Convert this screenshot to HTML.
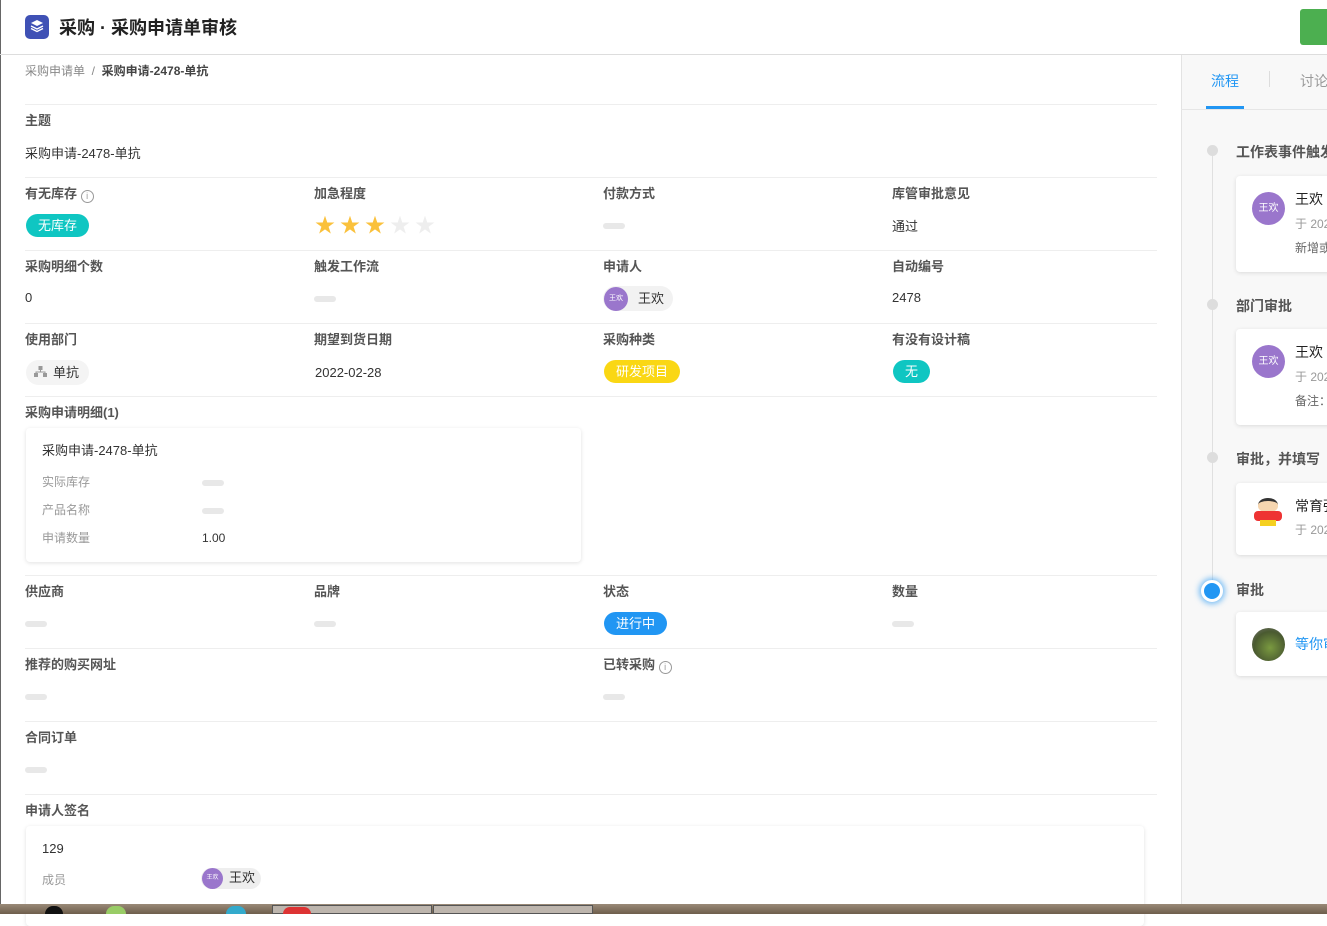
<!DOCTYPE html>
<html><head><meta charset="utf-8"><style>
*{margin:0;padding:0;box-sizing:border-box}
body{width:1327px;height:914px;overflow:hidden;background:#fff;font-family:"Liberation Sans","Noto Sans CJK SC",sans-serif;position:relative;color:#333;line-height:1}
.a{position:absolute;white-space:nowrap}
.lbl{font-size:13px;color:#555;font-weight:bold}
.val{font-size:13px;color:#333}
.line{position:absolute;left:25px;width:1132px;height:1px;background:#eee}
.dash{position:absolute;width:22px;height:6px;border-radius:3px;background:#e8e8e8}
.tag{position:absolute;height:23px;border-radius:12px;color:#fff;font-size:13px;line-height:23px;padding:0 12px}
.star{position:absolute;font-size:20px;line-height:20px}
.card{position:absolute;background:#fff;border-radius:4px;box-shadow:0 1px 4px rgba(0,0,0,.12)}
.av{position:absolute;border-radius:50%;background:#9a76cc;color:#fff;text-align:center}
.ii{display:inline-block;width:13px;height:13px;border:1px solid #999;border-radius:50%;font-size:9px;color:#999;text-align:center;line-height:11px;font-weight:normal;vertical-align:-1px}
</style></head><body>
<div class="a" style="left:0;top:0;width:1px;height:914px;background:#666"></div>
<div class="a" style="left:25px;top:15px;width:24px;height:24px;border-radius:5px;background:#3f51b5"></div>
<svg class="a" style="left:29px;top:18px" width="16" height="16" viewBox="0 0 16 16"><path d="M8 2 L14 5 L8 8 L2 5Z" fill="#fff"/><path d="M2 8 L8 11 L14 8 M2 10.5 L8 13.5 L14 10.5" stroke="#fff" stroke-width="1.3" fill="none"/></svg>
<div class="a" style="left:59px;top:19px;font-size:18px;font-weight:bold;color:#222">采购 · 采购申请单审核</div>
<div class="a" style="left:1300px;top:9px;width:27px;height:36px;background:#4caf50;border-radius:3px 0 0 3px"></div>
<div class="a" style="left:0;top:54px;width:1327px;height:1px;background:#ddd"></div>
<div class="a" style="left:25px;top:65px;font-size:12px;color:#888">采购申请单 &nbsp;/&nbsp; <span style="color:#444;font-weight:bold">采购申请-2478-单抗</span></div>

<div class="line" style="top:104px"></div>
<div class="a lbl" style="left:25px;top:114px">主题</div>
<div class="a val" style="left:25px;top:147px">采购申请-2478-单抗</div>

<div class="line" style="top:177px"></div>
<div class="a lbl" style="left:25px;top:187px">有无库存 <span class="ii">i</span></div>
<div class="tag" style="left:26px;top:214px;background:#0fc6c2">无库存</div>
<div class="a lbl" style="left:314px;top:187px">加急程度</div>
<div class="star" style="left:315px;top:216px;color:#fac13c">★</div>
<div class="star" style="left:340px;top:216px;color:#fac13c">★</div>
<div class="star" style="left:365px;top:216px;color:#fac13c">★</div>
<div class="star" style="left:390px;top:216px;color:#eee">★</div>
<div class="star" style="left:415px;top:216px;color:#eee">★</div>
<div class="a lbl" style="left:603px;top:187px">付款方式</div>
<div class="dash" style="left:603px;top:223px"></div>
<div class="a lbl" style="left:892px;top:187px">库管审批意见</div>
<div class="a val" style="left:892px;top:220px">通过</div>

<div class="line" style="top:250px"></div>
<div class="a lbl" style="left:25px;top:260px">采购明细个数</div>
<div class="a val" style="left:25px;top:291px">0</div>
<div class="a lbl" style="left:314px;top:260px">触发工作流</div>
<div class="dash" style="left:314px;top:296px"></div>
<div class="a lbl" style="left:603px;top:260px">申请人</div>
<div class="a" style="left:603px;top:286px;width:70px;height:25px;border-radius:13px;background:#f2f2f2"></div>
<div class="av" style="left:604px;top:287px;width:24px;height:24px;font-size:7px;line-height:24px">王欢</div>
<div class="a val" style="left:638px;top:292px">王欢</div>
<div class="a lbl" style="left:892px;top:260px">自动编号</div>
<div class="a val" style="left:892px;top:291px">2478</div>

<div class="line" style="top:323px"></div>
<div class="a lbl" style="left:25px;top:333px">使用部门</div>
<div class="a" style="left:26px;top:360px;width:63px;height:25px;border-radius:13px;background:#f4f4f4"></div>
<svg class="a" style="left:34px;top:366px" width="13" height="12" viewBox="0 0 13 12"><rect x="4.5" y="0" width="4" height="4" fill="#999"/><rect x="0" y="7" width="4" height="4" fill="#999"/><rect x="9" y="7" width="4" height="4" fill="#999"/><path d="M6.5 4V6M2 7V6H11V7" stroke="#999" fill="none"/></svg>
<div class="a val" style="left:53px;top:366px">单抗</div>
<div class="a lbl" style="left:314px;top:333px">期望到货日期</div>
<div class="a val" style="left:315px;top:366px">2022-02-28</div>
<div class="a lbl" style="left:603px;top:333px">采购种类</div>
<div class="tag" style="left:604px;top:360px;background:#fad714">研发项目</div>
<div class="a lbl" style="left:892px;top:333px">有没有设计稿</div>
<div class="tag" style="left:893px;top:360px;background:#0fc6c2">无</div>

<div class="line" style="top:396px"></div>
<div class="a lbl" style="left:25px;top:406px">采购申请明细(1)</div>
<div class="card" style="left:26px;top:428px;width:555px;height:134px"></div>
<div class="a val" style="left:42px;top:444px">采购申请-2478-单抗</div>
<div class="a" style="left:42px;top:476px;font-size:12px;color:#999">实际库存</div>
<div class="dash" style="left:202px;top:480px"></div>
<div class="a" style="left:42px;top:504px;font-size:12px;color:#999">产品名称</div>
<div class="dash" style="left:202px;top:508px"></div>
<div class="a" style="left:42px;top:532px;font-size:12px;color:#999">申请数量</div>
<div class="a" style="left:202px;top:532px;font-size:12px;color:#333">1.00</div>

<div class="line" style="top:575px"></div>
<div class="a lbl" style="left:25px;top:585px">供应商</div>
<div class="dash" style="left:25px;top:621px"></div>
<div class="a lbl" style="left:314px;top:585px">品牌</div>
<div class="dash" style="left:314px;top:621px"></div>
<div class="a lbl" style="left:603px;top:585px">状态</div>
<div class="tag" style="left:604px;top:612px;background:#2196f3">进行中</div>
<div class="a lbl" style="left:892px;top:585px">数量</div>
<div class="dash" style="left:892px;top:621px"></div>

<div class="line" style="top:648px"></div>
<div class="a lbl" style="left:25px;top:658px">推荐的购买网址</div>
<div class="dash" style="left:25px;top:694px"></div>
<div class="a lbl" style="left:603px;top:658px">已转采购 <span class="ii">i</span></div>
<div class="dash" style="left:603px;top:694px"></div>

<div class="line" style="top:721px"></div>
<div class="a lbl" style="left:25px;top:731px">合同订单</div>
<div class="dash" style="left:25px;top:767px"></div>

<div class="line" style="top:794px"></div>
<div class="a lbl" style="left:25px;top:804px">申请人签名</div>
<div class="card" style="left:26px;top:826px;width:1118px;height:100px"></div>
<div class="a val" style="left:42px;top:842px">129</div>
<div class="a" style="left:42px;top:874px;font-size:12px;color:#999">成员</div>
<div class="a" style="left:201px;top:868px;width:60px;height:21px;border-radius:11px;background:#eee"></div>
<div class="av" style="left:202px;top:868px;width:21px;height:21px;font-size:6px;line-height:21px">王欢</div>
<div class="a val" style="left:229px;top:871px">王欢</div>

<!-- right panel -->
<div class="a" style="left:1181px;top:55px;width:146px;height:859px;background:#f8f8f8;border-left:1px solid #e3e3e3"></div>
<div class="a" style="left:1181px;top:109px;width:146px;height:1px;background:#e6e6e6"></div>
<div class="a" style="left:1211px;top:74px;font-size:14px;color:#2196f3">流程</div>
<div class="a" style="left:1206px;top:106px;width:38px;height:3px;background:#2196f3"></div>
<div class="a" style="left:1269px;top:71px;width:1px;height:16px;background:#ddd"></div>
<div class="a" style="left:1300px;top:74px;font-size:14px;color:#999">讨论</div>
<div class="a" style="left:1212px;top:150px;width:1px;height:440px;background:#e0e0e0"></div>
<div class="a" style="left:1207px;top:145px;width:11px;height:11px;border-radius:50%;background:#ddd"></div>
<div class="a" style="left:1236px;top:145px;font-size:14px;font-weight:bold;color:#555">工作表事件触发</div>
<div class="card" style="left:1236px;top:176px;width:100px;height:96px"></div>
<div class="av" style="left:1252px;top:192px;width:33px;height:33px;font-size:10px;line-height:33px">王欢</div>
<div class="a" style="left:1295px;top:192px;font-size:14px;color:#222">王欢</div>
<div class="a" style="left:1295px;top:218px;font-size:12px;color:#999">于 2022</div>
<div class="a" style="left:1295px;top:242px;font-size:12px;color:#666">新增或</div>

<div class="a" style="left:1207px;top:299px;width:11px;height:11px;border-radius:50%;background:#ddd"></div>
<div class="a" style="left:1236px;top:299px;font-size:14px;font-weight:bold;color:#555">部门审批</div>
<div class="card" style="left:1236px;top:329px;width:100px;height:96px"></div>
<div class="av" style="left:1252px;top:345px;width:33px;height:33px;font-size:10px;line-height:33px">王欢</div>
<div class="a" style="left:1295px;top:345px;font-size:14px;color:#222">王欢</div>
<div class="a" style="left:1295px;top:371px;font-size:12px;color:#999">于 2022</div>
<div class="a" style="left:1295px;top:395px;font-size:12px;color:#666">备注：</div>

<div class="a" style="left:1207px;top:452px;width:11px;height:11px;border-radius:50%;background:#ddd"></div>
<div class="a" style="left:1236px;top:452px;font-size:14px;font-weight:bold;color:#555">审批，并填写</div>
<div class="card" style="left:1236px;top:483px;width:100px;height:72px"></div>
<div class="a" style="left:1258px;top:498px;width:20px;height:14px;border-radius:50% 50% 40% 40%;background:#f6d6b0;border-top:3px solid #333"></div>
<div class="a" style="left:1254px;top:511px;width:28px;height:10px;border-radius:4px;background:#e33"></div>
<div class="a" style="left:1260px;top:520px;width:16px;height:6px;background:#f5d020"></div>
<div class="a" style="left:1295px;top:499px;font-size:14px;color:#222">常育强</div>
<div class="a" style="left:1295px;top:524px;font-size:12px;color:#999">于 2022</div>

<div class="a" style="left:1201px;top:580px;width:22px;height:22px;border-radius:50%;background:#2196f3;border:3px solid #fff;box-shadow:0 0 6px 2px rgba(33,150,243,.6)"></div>
<div class="a" style="left:1236px;top:583px;font-size:14px;font-weight:bold;color:#555">审批</div>
<div class="card" style="left:1236px;top:612px;width:100px;height:64px"></div>
<div class="a" style="left:1252px;top:628px;width:33px;height:33px;border-radius:50%;background:radial-gradient(circle at 55% 60%,#7a9a40,#4a5a30 60%,#777)"></div>
<div class="a" style="left:1295px;top:637px;font-size:14px;color:#2196f3">等你审</div>

<!-- taskbar -->
<div class="a" style="left:0;top:904px;width:1327px;height:10px;background:linear-gradient(#9a8a78,#6e5e4c)"></div>
<div class="a" style="left:272px;top:905px;width:160px;height:9px;background:#bdb5ad;border:1px solid #555"></div>
<div class="a" style="left:433px;top:905px;width:160px;height:9px;background:#bdb5ad;border:1px solid #555"></div>
<div class="a" style="left:283px;top:907px;width:28px;height:7px;border-radius:14px 14px 0 0;background:#d33"></div>
<div class="a" style="left:45px;top:906px;width:18px;height:8px;border-radius:9px 9px 0 0;background:#111"></div>
<div class="a" style="left:106px;top:906px;width:20px;height:8px;border-radius:10px 10px 0 0;background:#9c6"></div>
<div class="a" style="left:226px;top:906px;width:20px;height:8px;border-radius:10px 10px 0 0;background:#3ac"></div>
</body></html>
